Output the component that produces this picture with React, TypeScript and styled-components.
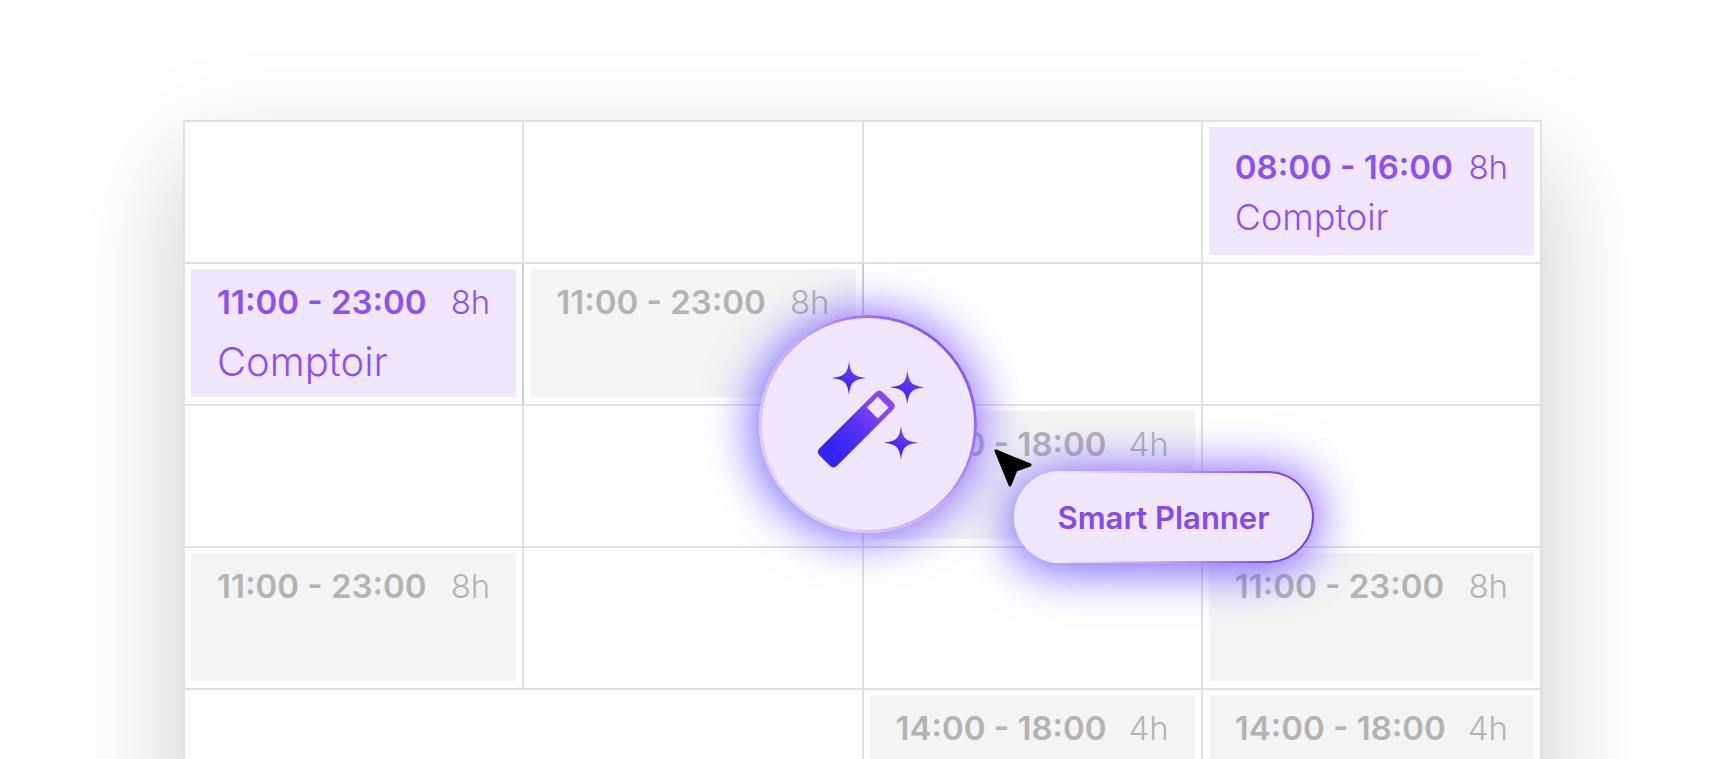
import React from "react";
import styled, { createGlobalStyle, css } from "styled-components";

const GlobalStyle = createGlobalStyle`
  *, *::before, *::after { box-sizing: border-box; }
  body {
    margin: 0;
    background: #fff;
    font-family: Inter, "Liberation Sans", sans-serif;
  }
`;

const Page = styled.main`
  height: 100vh;
  padding: 120px 186px 0 183px;
  overflow: hidden;
`;

const Board = styled.section`
  position: relative;
  background: #fff;
  box-shadow: 0 44px 104px rgba(0, 0, 0, 0.21);
`;

const Schedule = styled.table`
  width: 100%;
  table-layout: fixed;
  border-collapse: collapse;
`;

const Cell = styled.td<{ $strong?: boolean }>`
  height: 142px;
  padding: 5px 6px;
  border: 2px solid #e1e1e1;
  vertical-align: top;
  ${({ $strong }) =>
    $strong &&
    css`
      border-right-color: #cfcfcf;
    `}
`;

type Tone = "accent" | "muted";

const Shift = styled.article<{ $tone: Tone; $compact?: boolean }>`
  height: 128px;
  padding: ${({ $compact }) => ($compact ? "20px" : "13px")} 26px 0;
  color: ${({ $tone }) => ($tone === "accent" ? "#8c50f4" : "#b3b3b3")};
  background: ${({ $tone }) => ($tone === "accent" ? "#f0e7ff" : "#f4f4f4")};
`;

const Hours = styled.div`
  display: flex;
  justify-content: space-between;
  font-size: 33px;
  line-height: 40px;
  white-space: nowrap;
`;

const Range = styled.span`
  font-weight: 600;
`;

const Duration = styled.span`
  font-weight: 300;
`;

const Place = styled.div<{ $compact?: boolean }>`
  margin-top: ${({ $compact }) => ($compact ? "10px" : "20px")};
  font-size: ${({ $compact }) => ($compact ? "36px" : "40px")};
  line-height: 40px;
  font-weight: 300;
`;

const WandButton = styled.button`
  position: absolute;
  top: 195px;
  left: calc(50% - 104px);
  width: 218px;
  height: 218px;
  padding: 0;
  border: 3px solid transparent;
  border-radius: 50%;
  background:
    linear-gradient(#f0e7ff, #f0e7ff) padding-box,
    linear-gradient(50deg, #e0ccff 20%, #c9a4fb 50%, #8a55f3 85%) border-box;
  box-shadow:
    -8px 4px 48px rgba(78, 66, 255, 0.62),
    8px -2px 48px rgba(150, 84, 255, 0.48);
`;

const WandDrawing = styled.svg`
  display: block;
  width: 212px;
  height: 212px;
`;

const PlannerButton = styled.button`
  position: absolute;
  top: 351px;
  left: calc(50% + 151px);
  height: 92px;
  width: 300px;
  padding: 2px 0 0;
  border: 2px solid transparent;
  border-radius: 46px;
  background:
    linear-gradient(#f0e7ff, #f0e7ff) padding-box,
    linear-gradient(90deg, #f0e7ff 15%, #c9a4fb 50%, #7a3df0 90%) border-box;
  box-shadow:
    -6px 8px 48px rgba(78, 66, 255, 0.64),
    8px -4px 48px rgba(150, 84, 255, 0.54);
  color: #8549f0;
  font-family: inherit;
  font-size: 31px;
  line-height: 40px;
  font-weight: 600;
`;

const Pointer = styled.svg`
  position: absolute;
  top: 328px;
  left: calc(50% + 130px);
  width: 40px;
  height: 40px;
`;

interface ShiftData {
  range: string;
  duration: string;
  place?: string;
  tone: Tone;
  compact?: boolean;
}

interface CellData {
  shift?: ShiftData;
  span?: number;
  strong?: boolean;
}

const evening: ShiftData = { range: "11:00 - 23:00", duration: "8h", tone: "muted" };
const afternoon: ShiftData = { range: "14:00 - 18:00", duration: "4h", tone: "muted" };

const rows: CellData[][] = [
  [
    {},
    {},
    {},
    { shift: { range: "08:00 - 16:00", duration: "8h", place: "Comptoir", tone: "accent", compact: true } },
  ],
  [
    { shift: { ...evening, place: "Comptoir", tone: "accent" }, strong: true },
    { shift: evening, strong: true },
    {},
    {},
  ],
  [{}, {}, { shift: afternoon }, {}],
  [{ shift: evening }, {}, {}, { shift: evening }],
  [{ span: 2 }, { shift: afternoon }, { shift: afternoon }],
];

function ShiftCard({ range, duration, place, tone, compact }: ShiftData) {
  return (
    <Shift $tone={tone} $compact={compact}>
      <Hours>
        <Range>{range}</Range>
        <Duration>{duration}</Duration>
      </Hours>
      {place && <Place $compact={compact}>{place}</Place>}
    </Shift>
  );
}

const stars = [
  [327, 264],
  [502, 292],
  [483, 458],
];

function Wand() {
  return (
    <WandDrawing viewBox="66 84 636 636" aria-hidden="true">
      <defs>
        <linearGradient id="stick" x1="0" y1="1" x2="0" y2="0">
          <stop offset="0.15" stopColor="#3424f2" />
          <stop offset="0.55" stopColor="#5a34f2" />
          <stop offset="0.85" stopColor="#8648f5" />
        </linearGradient>
        <linearGradient id="star" x1="0.3" y1="1" x2="0.7" y2="0">
          <stop offset="0.3" stopColor="#4029f2" />
          <stop offset="1" stopColor="#8648f5" />
        </linearGradient>
      </defs>
      {stars.map(([x, y]) => (
        <path
          key={x}
          transform={`translate(${x} ${y})`}
          fill="url(#star)"
          d="M0-51C5-14 11-6 51 0C11 6 5 14 0 51C-5 14-11 6-51 0C-11-6-5-14 0-51Z"
        />
      ))}
      <g transform="translate(349 417) rotate(45)">
        <path
          fill="url(#stick)"
          fillRule="evenodd"
          d="M-22-134H22Q37-134 37-119V119Q37 134 22 134H-22Q-37 134-37 119V-119Q-37-134-22-134ZM-23-114V-68H23V-114Z"
        />
      </g>
    </WandDrawing>
  );
}

export default function App() {
  return (
    <>
      <GlobalStyle />
      <Page>
        <Board>
          <Schedule>
            <tbody>
              {rows.map((row, r) => (
                <tr key={r}>
                  {row.map(({ shift, span, strong }, c) => (
                    <Cell key={c} colSpan={span} $strong={strong}>
                      {shift && <ShiftCard {...shift} />}
                    </Cell>
                  ))}
                </tr>
              ))}
            </tbody>
          </Schedule>
          <WandButton type="button" aria-label="Magic wand">
            <Wand />
          </WandButton>
          <PlannerButton type="button">Smart Planner</PlannerButton>
          <Pointer viewBox="0 0 40 40" aria-hidden="true">
            <path
              d="M3 3L37 17L23 22L17 37Z"
              fill="#000"
              stroke="#000"
              strokeWidth="3"
              strokeLinejoin="round"
            />
          </Pointer>
        </Board>
      </Page>
    </>
  );
}
